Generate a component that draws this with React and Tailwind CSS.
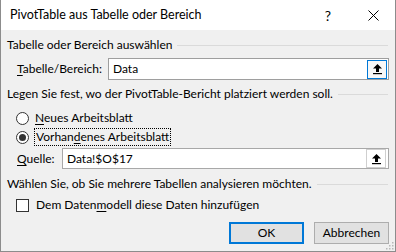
import React from "react";

function GroupHeader({ children, mt }) {
  return (
    <div className={`flex items-center h-[16px] ${mt}`}>
      <span className="whitespace-nowrap">{children}</span>
      <div className="flex-1 h-px bg-[#dadada] ml-[5px] mr-px"></div>
    </div>
  );
}

function RefButton({ focused }) {
  return (
    <div
      className={`w-[20px] h-[19px] flex items-center justify-center ${
        focused ? "border border-[#0078d7] bg-[#f8f8f8]" : "border border-[#cfcfcf] bg-white"
      }`}
    >
      <svg width="11" height="12" viewBox="0 0 11 12">
        <path d="M5.5 1 L10 5.5 L7 5.5 L7 9 L4 9 L4 5.5 L1 5.5 Z" fill="#000" />
        <rect x="1" y="10" width="9" height="1.2" fill="#000" />
      </svg>
    </div>
  );
}

function Radio({ checked }) {
  return (
    <div className="w-[13px] h-[13px] rounded-full border border-[#333] bg-white flex items-center justify-center">
      {checked && <div className="w-[7px] h-[7px] rounded-full bg-[#333]"></div>}
    </div>
  );
}

export default function App() {
  return (
    <div
      className="w-[396px] h-[252px] flex flex-col bg-[#f0f0f0] border-l border-r border-b border-[#8c8c8c] text-[12px] text-black relative overflow-hidden"
      style={{ fontFamily: "Lato, 'Liberation Sans', sans-serif" }}
    >
      {/* Title bar */}
      <div className="h-[30px] bg-white flex items-center shrink-0">
        <span className="ml-[9px] text-[12.5px]">PivotTable aus Tabelle oder Bereich</span>
        <span className="ml-auto text-[14px] mr-[37px]">?</span>
        <svg width="11" height="11" viewBox="0 0 11 11" className="mr-[16px]">
          <path d="M0.5 0.5 L10.5 10.5 M10.5 0.5 L0.5 10.5" stroke="#000" strokeWidth="1" />
        </svg>
      </div>

      {/* Body */}
      <div className="flex-1 flex flex-col px-[6px]">
        <GroupHeader mt="mt-[7px]">Tabelle oder Bereich auswählen</GroupHeader>

        <div className="flex items-center mt-[5px] h-[22px]">
          <span className="ml-[10px] w-[91px]">
            <u className="underline-offset-2">T</u>abelle/Bereich:
          </span>
          <div className="flex-1 h-[22px] border border-[#9e9e9e] bg-white flex items-center">
            <span className="ml-[4px]">Data</span>
            <div className="ml-auto mr-px">
              <RefButton focused />
            </div>
          </div>
        </div>

        <GroupHeader mt="mt-[6px]">Legen Sie fest, wo der PivotTable-Bericht platziert werden soll.</GroupHeader>

        <div className="flex items-center mt-[8px] h-[16px] ml-[9px]">
          <Radio />
          <span className="ml-[6px]">
            <u className="underline-offset-2">N</u>eues Arbeitsblatt
          </span>
        </div>

        <div className="flex items-center mt-[2px] h-[18px] ml-[9px]">
          <Radio checked />
          <span className="ml-[5px] h-[18px] flex items-center px-px border border-dotted border-black">
            <span>
              Vorhan<u className="underline-offset-2">d</u>enes Arbeitsblatt
            </span>
          </span>
        </div>

        <div className="flex items-center mt-[2px] h-[21px]">
          <span className="ml-[10px] w-[45px]">
            <u className="underline-offset-2">Q</u>uelle:
          </span>
          <div className="flex-1 h-[21px] border border-[#a8a8a8] bg-white flex items-center">
            <span className="ml-[4px]">Data!$O$17</span>
            <div className="ml-auto mr-[2px]">
              <RefButton />
            </div>
          </div>
        </div>

        <GroupHeader mt="mt-[7px]">Wählen Sie, ob Sie mehrere Tabellen analysieren möchten.</GroupHeader>

        <div className="flex items-center mt-[5px] h-[16px] ml-[9px]">
          <div className="w-[13px] h-[13px] border border-[#333] bg-white"></div>
          <span className="ml-[7px]">
            Dem Daten<u className="underline-offset-2">m</u>odell diese Daten hinzufügen
          </span>
        </div>

        <div className="flex justify-end mt-[9px] gap-[10px]">
          <button className="w-[75px] h-[22px] border-2 border-[#0078d7] bg-[#e1e1e1] flex items-center justify-center">
            OK
          </button>
          <button className="w-[75px] h-[22px] border border-[#adadad] bg-[#e1e1e1] flex items-center justify-center">
            Abbrechen
          </button>
        </div>
      </div>

      {/* size grip */}
      <svg width="9" height="9" viewBox="0 0 9 9" className="absolute right-[1px] bottom-[1px]">
        <rect x="7" y="1" width="1.5" height="1.5" fill="#b8b8b8" />
        <rect x="4" y="4" width="1.5" height="1.5" fill="#b8b8b8" />
        <rect x="7" y="4" width="1.5" height="1.5" fill="#b8b8b8" />
        <rect x="1" y="7" width="1.5" height="1.5" fill="#b8b8b8" />
        <rect x="4" y="7" width="1.5" height="1.5" fill="#b8b8b8" />
        <rect x="7" y="7" width="1.5" height="1.5" fill="#b8b8b8" />
      </svg>
    </div>
  );
}
